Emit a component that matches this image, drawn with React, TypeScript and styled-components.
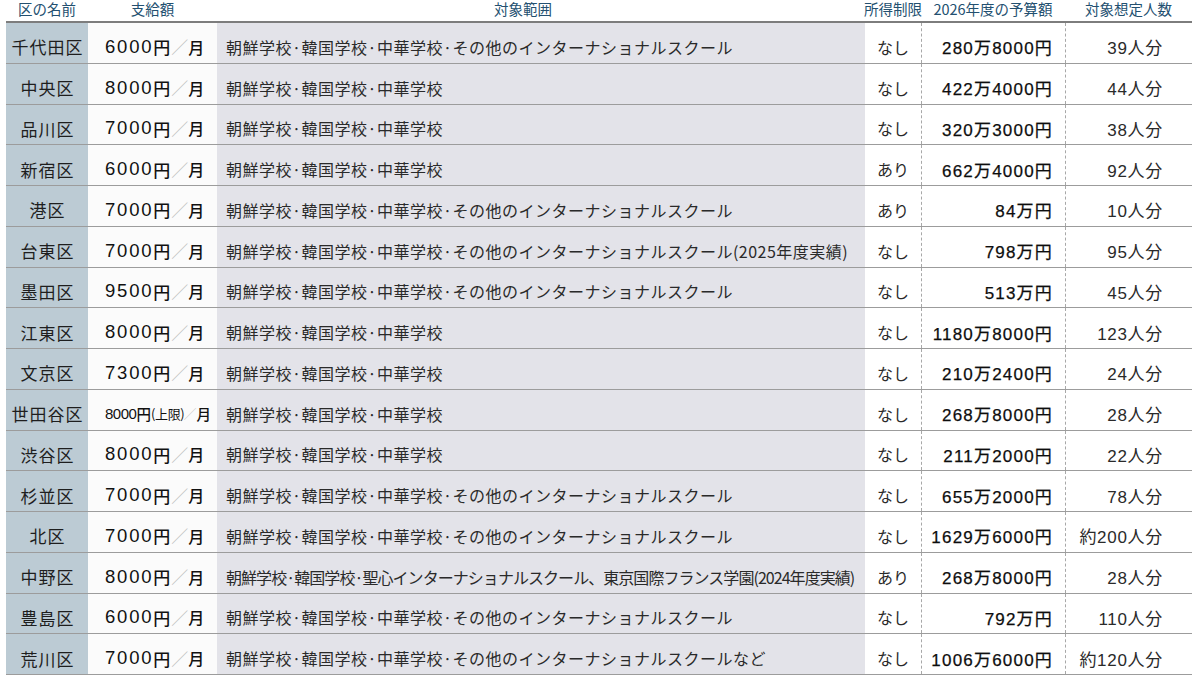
import { FC } from 'react';
import styled, { createGlobalStyle } from 'styled-components';

type Row = {
  ward: string;
  amount: string;
  note?: string;
  scope: string;
  tight?: boolean;
  limit: string;
  budget: string;
  people: string;
};

const BASIC = '朝鮮学校·韓国学校·中華学校';
const INTL = '朝鮮学校·韓国学校·中華学校·その他のインターナショナルスクール';

const rows: Row[] = [
  { ward: '千代田区', amount: '6000', scope: INTL, limit: 'なし', budget: '280万8000円', people: '39人分' },
  { ward: '中央区', amount: '8000', scope: BASIC, limit: 'なし', budget: '422万4000円', people: '44人分' },
  { ward: '品川区', amount: '7000', scope: BASIC, limit: 'なし', budget: '320万3000円', people: '38人分' },
  { ward: '新宿区', amount: '6000', scope: BASIC, limit: 'あり', budget: '662万4000円', people: '92人分' },
  { ward: '港区', amount: '7000', scope: INTL, limit: 'あり', budget: '84万円', people: '10人分' },
  { ward: '台東区', amount: '7000', scope: INTL + '(2025年度実績)', limit: 'なし', budget: '798万円', people: '95人分' },
  { ward: '墨田区', amount: '9500', scope: INTL, limit: 'なし', budget: '513万円', people: '45人分' },
  { ward: '江東区', amount: '8000', scope: BASIC, limit: 'なし', budget: '1180万8000円', people: '123人分' },
  { ward: '文京区', amount: '7300', scope: BASIC, limit: 'なし', budget: '210万2400円', people: '24人分' },
  { ward: '世田谷区', amount: '8000', note: '(上限)', scope: BASIC, limit: 'なし', budget: '268万8000円', people: '28人分' },
  { ward: '渋谷区', amount: '8000', scope: BASIC, limit: 'なし', budget: '211万2000円', people: '22人分' },
  { ward: '杉並区', amount: '7000', scope: INTL, limit: 'なし', budget: '655万2000円', people: '78人分' },
  { ward: '北区', amount: '7000', scope: INTL, limit: 'なし', budget: '1629万6000円', people: '約200人分' },
  {
    ward: '中野区',
    amount: '8000',
    scope: '朝鮮学校·韓国学校·聖心インターナショナルスクール、東京国際フランス学園(2024年度実績)',
    tight: true,
    limit: 'あり',
    budget: '268万8000円',
    people: '28人分',
  },
  { ward: '豊島区', amount: '6000', scope: INTL, limit: 'なし', budget: '792万円', people: '110人分' },
  { ward: '荒川区', amount: '7000', scope: INTL + 'など', limit: 'なし', budget: '1006万6000円', people: '約120人分' },
];

const GlobalStyle = createGlobalStyle`
  html, body {
    margin: 0;
    padding: 0;
    background: #ffffff;
    overflow: hidden;
  }
  body {
    font-family: 'Liberation Sans', 'Noto Sans CJK JP', sans-serif;
    color: #222;
  }
`;

const CJK = `'Noto Sans CJK JP', 'Noto Sans', sans-serif`;
const COLS = '82px 129px 648px 56px 144px 127px';

const Page = styled.div`
  width: 1200px;
  height: 675px;
  padding-left: 6px;
  box-sizing: border-box;
  overflow: hidden;
`;

const Table = styled.div`
  width: 1186px;
`;

const HeadRow = styled.div`
  display: grid;
  grid-template-columns: ${COLS};
  height: 23px;
  border-bottom: 2px solid #7d7d7d;
  box-sizing: border-box;
`;

const HeadCell = styled.div<{ $shift?: number }>`
  display: flex;
  align-items: center;
  justify-content: center;
  font-family: ${CJK};
  font-size: 14.5px;
  line-height: 1.3;
  padding-bottom: 2px;
  color: #235070;
  white-space: nowrap;
  transform: translateX(${p => p.$shift ?? 0}px);
`;

const BodyRow = styled.div`
  display: grid;
  grid-template-columns: ${COLS};
  height: 40.75px;
  box-sizing: border-box;
  border-bottom: 1px solid #9c9c9c;
`;

const Cell = styled.div<{ $bg?: string; $align?: 'left' | 'center' | 'right'; $pad?: string; $dashed?: boolean }>`
  display: flex;
  align-items: center;
  justify-content: ${p => (p.$align === 'right' ? 'flex-end' : p.$align === 'center' ? 'center' : 'flex-start')};
  padding: ${p => p.$pad ?? '0'};
  padding-top: 8px;
  background: ${p => p.$bg ?? 'transparent'};
  border-left: ${p => (p.$dashed ? '1px dashed #a8a8a8' : 'none')};
  box-sizing: border-box;
  white-space: nowrap;
  overflow: hidden;
`;

const Ward = styled.span`
  font-family: ${CJK};
  font-size: 17px;
  color: #1e1e1e;
  letter-spacing: 1px;
  margin-right: -1px;
`;

const Amount = styled.span<{ $small?: boolean }>`
  font-size: ${p => (p.$small ? '15px' : '18.5px')};
  letter-spacing: ${p => (p.$small ? '-0.5px' : '1.8px')};
  color: #111;
`;

const Yen = styled.span<{ $small?: boolean }>`
  font-family: ${CJK};
  font-size: ${p => (p.$small ? '14.5px' : '17px')};
  font-weight: 500;
  color: #111;
`;

const Note = styled.span`
  font-family: ${CJK};
  font-size: 13px;
  letter-spacing: -0.3px;
  color: #111;
`;

const Slash = styled.span<{ $small?: boolean }>`
  font-family: ${CJK};
  font-size: ${p => (p.$small ? '13px' : '17px')};
  font-weight: 300;
  color: #bdbdbd;
  margin-left: ${p => (p.$small ? '-1px' : '1px')};
`;

const Month = styled.span<{ $small?: boolean }>`
  font-family: ${CJK};
  font-size: ${p => (p.$small ? '14.5px' : '16px')};
  font-weight: 500;
  color: #111;
`;

const Scope = styled.span<{ $tight?: boolean }>`
  font-family: ${CJK};
  font-size: 16px;
  color: #2a2a2a;
  letter-spacing: ${p => (p.$tight ? '-0.95px' : '0.5px')};
`;

const Plain = styled.span`
  font-family: ${CJK};
  font-size: 16px;
  color: #2a2a2a;
`;

const Budget = styled.span`
  font-size: 17px;
  font-weight: 400;
  color: #0d0d0d;
  letter-spacing: 1.2px;
  -webkit-text-stroke: 0.25px #0d0d0d;
`;

const People = styled.span`
  font-size: 17px;
  color: #2a2a2a;
  letter-spacing: 0.7px;
`;

const DataRow: FC<{ row: Row }> = ({ row }) => {
  const small = Boolean(row.note);
  return (
    <BodyRow>
      <Cell $bg="#bccbd4" $align="center">
        <Ward>{row.ward}</Ward>
      </Cell>
      <Cell $bg="#fbfbfb" $pad="0 0 0 17px">
        <Amount $small={small}>{row.amount}</Amount>
        <Yen $small={small}>円</Yen>
        {row.note && <Note>{row.note}</Note>}
        <Slash $small={small}>／</Slash>
        <Month $small={small}>月</Month>
      </Cell>
      <Cell $bg="#e3e3e9" $pad="0 0 0 9px">
        <Scope $tight={row.tight}>{row.scope}</Scope>
      </Cell>
      <Cell $align="center">
        <Plain>{row.limit}</Plain>
      </Cell>
      <Cell $align="right" $pad="0 12px 0 0" $dashed>
        <Budget>{row.budget}</Budget>
      </Cell>
      <Cell $align="right" $pad="0 29px 0 0" $dashed>
        <People>{row.people}</People>
      </Cell>
    </BodyRow>
  );
};

export default function App() {
  return (
    <>
      <GlobalStyle />
      <Page>
        <Table>
          <HeadRow>
            <HeadCell>区の名前</HeadCell>
            <HeadCell>支給額</HeadCell>
            <HeadCell $shift={-18}>対象範囲</HeadCell>
            <HeadCell>所得制限</HeadCell>
            <HeadCell>2026年度の予算額</HeadCell>
            <HeadCell>対象想定人数</HeadCell>
          </HeadRow>
          {rows.map(r => (
            <DataRow key={r.ward} row={r} />
          ))}
        </Table>
      </Page>
    </>
  );
}
